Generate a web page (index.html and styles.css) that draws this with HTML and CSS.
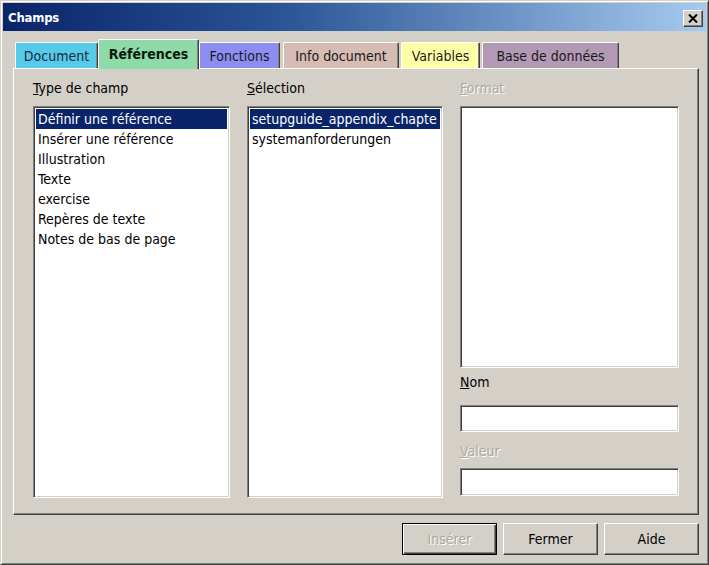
FILE: index.html
```html
<!DOCTYPE html>
<html lang="fr">
<head>
<meta charset="utf-8">
<title>Champs</title>
<link rel="stylesheet" href="styles.css">
</head>
<body>
<div class="window">
  <div class="titlebar">
    <span class="title">Champs</span>
    <span class="close-btn">
      <svg width="10" height="9" viewBox="0 0 10 9"><path d="M1 0.5 L9 8.5 M9 0.5 L1 8.5" stroke="#000" stroke-width="2" fill="none"/></svg>
    </span>
  </div>
  <div class="tabs">
    <div class="tab tab-doc">Document</div>
    <div class="tab tab-ref active">Références</div>
    <div class="tab tab-fn">Fonctions</div>
    <div class="tab tab-info">Info document</div>
    <div class="tab tab-var">Variables</div>
    <div class="tab tab-db">Base de données</div>
  </div>
  <div class="panel">
    <div class="col col-type">
      <div class="label"><u>T</u>ype de champ</div>
      <div class="listbox sunken">
        <div class="item selected">Définir une référence</div>
        <div class="item">Insérer une référence</div>
        <div class="item">Illustration</div>
        <div class="item">Texte</div>
        <div class="item">exercise</div>
        <div class="item">Repères de texte</div>
        <div class="item">Notes de bas de page</div>
      </div>
    </div>
    <div class="col col-sel">
      <div class="label"><u>S</u>élection</div>
      <div class="listbox sunken">
        <div class="item selected">setupguide_appendix_chapte</div>
        <div class="item">systemanforderungen</div>
      </div>
    </div>
    <div class="col col-fmt">
      <div class="label disabled"><u>F</u>ormat</div>
      <div class="formatbox sunken"></div>
      <div class="label label-nom"><u>N</u>om</div>
      <div class="field sunken"></div>
      <div class="label label-val disabled"><u>V</u>aleur</div>
      <div class="field field-val sunken"></div>
    </div>
  </div>
  <div class="buttons">
    <div class="btn btn-default disabled">Insérer</div>
    <div class="btn">Fermer</div>
    <div class="btn">Aide</div>
  </div>
</div>
</body>
</html>
```
FILE: styles.css
```css
html, body {
  margin: 0;
  padding: 0;
  background: #d4d0c8;
}
body {
  width: 709px;
  height: 565px;
  overflow: hidden;
  font-family: "DejaVu Sans Condensed", "DejaVu Sans", sans-serif;
  font-size: 14px;
  color: #000;
}
.window {
  box-sizing: border-box;
  width: 709px;
  height: 565px;
  background: #d4d0c8;
  border: 1px solid;
  border-color: #d4d0c8 #404040 #404040 #d4d0c8;
  box-shadow: inset 1px 1px #ffffff, inset -1px -1px #808080;
  padding: 2px;
  display: flex;
  flex-direction: column;
}
.titlebar {
  height: 28px;
  flex: none;
  display: flex;
  align-items: center;
  justify-content: space-between;
  padding: 0 3px 0 5px;
  background: linear-gradient(to right, #0a246a 0%, #2a5596 40%, #a6caf0 100%);
}
.title {
  color: #fff;
  font-weight: bold;
  font-size: 13px;
  letter-spacing: -0.2px;
}
.close-btn {
  box-sizing: border-box;
  width: 20px;
  height: 17px;
  background: #d4d0c8;
  border: 1px solid;
  border-color: #fff #404040 #404040 #fff;
  box-shadow: inset -1px -1px #808080;
  display: flex;
  align-items: center;
  justify-content: center;
  margin-top: 2px;
}
.close-btn svg { display: block; }
.tabs {
  display: flex;
  align-items: flex-end;
  height: 29px;
  margin-top: 8px;
  padding-left: 12px;
  flex: none;
}
.tab {
  box-sizing: border-box;
  height: 26px;
  display: flex;
  align-items: center;
  justify-content: center;
  border-top: 1px solid #fff;
  border-left: 1px solid #fff;
  border-right: 1px solid #404040;
  box-shadow: inset -1px 0 #808080;
  border-radius: 2px 2px 0 0;
  color: #1a1a1a;
  font-size: 14px;
}
.tab.active {
  height: 30px;
  font-weight: bold;
  position: relative;
  z-index: 2;
  margin-bottom: -1px;
  padding-bottom: 1px;
  color: #0a1a0a;
}
.tab-doc { width: 83px; background: #56cbe9; color: #1a2a3a; }
.tab-ref { width: 101px; background: #8fdaa9; }
.tab-fn { width: 81px; background: #8c8ef2; }
.tab-info { width: 116px; margin-left: 3px; background: #d6bcb3; }
.tab-var { width: 79px; margin-left: 2px; background: #ffffa6; }
.tab-db { width: 137px; margin-left: 2px; background: #b39ab4; }
.panel {
  box-sizing: border-box;
  height: 447px;
  margin: 0 7px 0 10px;
  border: 1px solid;
  border-color: #fff #404040 #404040 #fff;
  box-shadow: inset -1px -1px #808080;
  padding: 10px 0 0 19px;
  display: flex;
  gap: 17px;
  flex: none;
}
.col {
  display: flex;
  flex-direction: column;
}
.col-type { width: 197px; }
.col-sel { width: 196px; }
.col-fmt { width: 219px; }
.label {
  height: 18px;
  line-height: 18px;
  margin-bottom: 9px;
  white-space: nowrap;
}
.label.disabled {
  color: #aaa8a2;
  text-shadow: 1px 1px #fff;
}
.sunken {
  box-sizing: border-box;
  background: #fff;
  border: 1px solid;
  border-color: #808080 #fff #fff #808080;
  box-shadow: inset 1px 1px #404040, inset -1px -1px #d4d0c8;
}
.listbox {
  height: 392px;
  padding: 2px;
  overflow: hidden;
}
.item {
  height: 20px;
  line-height: 20px;
  padding-left: 2px;
  white-space: nowrap;
  overflow: hidden;
}
.item.selected {
  background: #0a246a;
  color: #fff;
}
.formatbox {
  height: 262px;
}
.label-nom {
  margin-top: 5px;
  margin-bottom: 14px;
}
.field {
  height: 27px;
}
.label-val {
  margin-top: 10px;
  margin-bottom: 8px;
}
.field-val {
  height: 28px;
}
.buttons {
  display: flex;
  justify-content: flex-end;
  gap: 6px;
  margin-top: 8px;
  padding-right: 7px;
  flex: none;
}
.btn {
  box-sizing: border-box;
  width: 95px;
  height: 32px;
  display: flex;
  align-items: center;
  justify-content: center;
  border: 1px solid;
  border-color: #fff #404040 #404040 #fff;
  box-shadow: inset -1px -1px #808080;
  font-size: 14px;
}
.btn-default {
  border-color: #000;
  box-shadow: inset 1px 1px #fff, inset -1px -1px #404040, inset -2px -2px #808080;
}
.btn.disabled {
  color: #aaa8a2;
  text-shadow: 1px 1px #fff;
}
```
